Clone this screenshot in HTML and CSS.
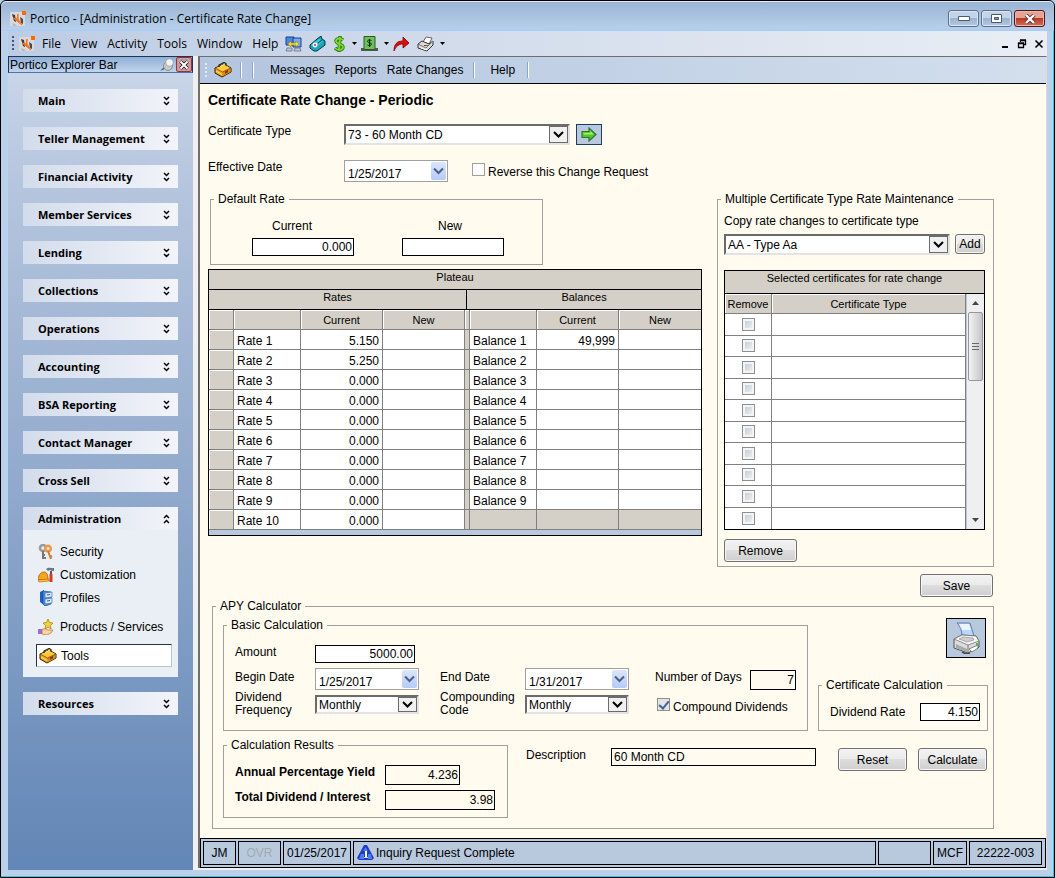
FILE: index.html
```
<!DOCTYPE html>
<html lang="en">
<head>
<meta charset="utf-8">
<title>Portico - [Administration - Certificate Rate Change]</title>
<link rel="stylesheet" href="styles.css">
</head>
<body>
<svg class="defs" aria-hidden="true">
  <symbol id="logo" viewBox="0 0 16 16">
    <path d="M0 1h12v3h3v11H0z" fill="#d9d9dc"/>
    <path d="M2 3l3 1 1 7-2-1z" fill="#3c3c44"/><path d="M10 6l3 2v5l-2-1z" fill="#4a4a52"/>
    <path d="M8 3v5l4 6-5-4-4-3 4 1z" fill="#f4731c" stroke="#f4731c"/>
    <path d="M2 12l3 1 2 2H3z" fill="#b9b9bf"/>
    <path d="M12 0h4v4h-4z" fill="#ff6a00"/>
  </symbol>
  <symbol id="toolbox" viewBox="0 0 18 16">
    <path d="M1 6l9-4 7 4v4l-9 5-7-4z" fill="#f6a81c" stroke="#2a1a00"/>
    <path d="M1.500 6.200L10 2.500l6.500 3.700L8.500 10z" fill="#ffcb3c"/>
    <path d="M8.500 10v4.500l8-4.500V6.200z" fill="#d98a10"/>
    <path d="M1.500 6.200l7 3.800 8-3.800" fill="none" stroke="#7a4600" stroke-width=".8"/>
    <path d="M5 5V3l5-2.500L12 1.500v2" fill="none" stroke="#2a1a00" stroke-width="1.200"/>
    <path d="M6 4.500l5-2.500" stroke="#fff0a0"/>
    <path d="M11 9.500l3-1.600v2.300l-3 1.600z" fill="#8c2f08"/>
    <path d="M2 9l6 3.500" stroke="#ffd970"/>
  </symbol>
  <symbol id="down" viewBox="0 0 7 10"><path d="M1 1l2.500 2.500L6 1M1 6l2.500 2.500L6 6" fill="none" stroke="#000" stroke-width="1.500"/></symbol>
  <symbol id="up" viewBox="0 0 7 10"><path d="M1 4l2.500-2.500L6 4M1 9l2.500-2.500L6 9" fill="none" stroke="#000" stroke-width="1.500"/></symbol>
  <symbol id="chev" viewBox="0 0 11 8"><path d="M1 1.500L5.500 6 10 1.500" fill="none" stroke="currentColor" stroke-width="2"/></symbol>
  <symbol id="caret" viewBox="0 0 6 4"><path d="M0 0h5L2.500 3z" fill="#000"/></symbol>
  <symbol id="printer" viewBox="0 0 30 32">
    <path d="M6 1h13l4 13H11C11 8 9 4 6 1z" fill="#b9d7fb" stroke="#5f7dab"/>
    <path d="M8 2h10l2 6h-9z" fill="#e8f3ff"/>
    <path d="M3 17l8-4 14 1 3 5v6l-11 6L3 26z" fill="#dcdcdc" stroke="#555"/>
    <path d="M3 17l8-4 14 1 3 5-11 4z" fill="#f6f6f6" stroke="#777" stroke-width=".8"/>
    <path d="M8 17l4-2 10 1 1 2-7 2z" fill="#cfcfcf" stroke="#888" stroke-width=".6"/>
    <path d="M17 23v8" stroke="#777"/><path d="M5 22l11 5v3L5 26z" fill="#aaa"/>
    <path d="M18 27l9-4v3l-6 4z" fill="#fff" stroke="#555" stroke-width=".7"/>
    <path d="M25 21h2v2h-2z" fill="#3ec61c"/><path d="M11 30l4 2 4-1" fill="none" stroke="#444" stroke-width="1.400"/>
  </symbol>
</svg>

<header class="titlebar">
  <svg class="i16"><use href="#logo"/></svg>
  <span class="title">Portico - [Administration - Certificate Rate Change]</span>
  <div class="winbuttons">
    <button aria-label="Minimize"><svg width="12" height="6" viewBox="0 0 12 6"><path d="M.5.5h11v4H.5z" fill="#fff" stroke="#4c5a6e"/></svg></button>
    <button aria-label="Maximize"><svg width="12" height="10" viewBox="0 0 12 10"><path d="M.5.5h10v8H.5z" fill="#fff" stroke="#4c5a6e"/><path d="M3.500 3.500h4v2h-4z" fill="#7d9cc0" stroke="#4c5a6e"/></svg></button>
    <button class="close" aria-label="Close"><svg width="12" height="10" viewBox="0 0 12 10"><path d="M2 1l8 8M10 1L2 9" stroke="#5d3034" stroke-width="4"/><path d="M2 1l8 8M10 1L2 9" stroke="#fff" stroke-width="2.400"/></svg></button>
  </div>
</header>

<div class="frame">
<nav class="menubar">
  <span class="grip"></span>
  <svg class="i16 logo"><use href="#logo"/></svg>
  <button>File</button><button>View</button><button>Activity</button><button>Tools</button><button>Window</button><button>Help</button>
  <div class="icons">
    <button aria-label="Connections"><svg width="17" height="16" viewBox="0 0 17 16"><path d="M1 1h8v8H1z" fill="#4b86e0" stroke="#1b3f96"/><path d="M8 2h8v9H8z" fill="#73aaf2" stroke="#1b3f96"/><path d="M2 12h5v3H1zM10 12h5l1 3H9z" fill="#bcc6dc" stroke="#5a6480" stroke-width=".7"/><path d="M3 8l3-3v2h5V5l3 3-3 3V9H6v2z" fill="#ffdc1e" stroke="#a07800" stroke-width=".5"/></svg></button>
    <button aria-label="Phone"><svg width="17" height="16" viewBox="0 0 17 16"><path d="M1 9l7-6 4-3 1 3 3 2v4l-8 6H5l-4-3z" fill="#1aa6bd" stroke="#06343f"/><path d="M2 9l8-6 4 2-8 7z" fill="#3cc6d8"/><circle cx="6" cy="9" r="2.400" fill="#fff"/><circle cx="6" cy="9" r="1.200" fill="#d44cc0"/><path d="M9 7l4-3" stroke="#06343f"/></svg></button>
    <button class="drop" aria-label="Money"><svg width="13" height="16" viewBox="0 0 13 16"><path d="M10 4C8 2 3 2 3 5s7 3 7 6-5 4-8 1M7 0L6 16" fill="none" stroke="#2d7c0c" stroke-width="3.400"/><path d="M10 4C8 2 3 2 3 5s7 3 7 6-5 4-8 1M7 1L6 15" fill="none" stroke="#7fd83a" stroke-width="1.700"/></svg><svg class="caret"><use href="#caret"/></svg></button>
    <button class="drop" aria-label="Cash"><svg width="17" height="16" viewBox="0 0 17 16"><path d="M3 .5h11v13H3z" fill="#6cbf5c" stroke="#2a5a26"/><path d="M0 12h3v2h11v-2h3v3H0z" fill="#555"/><path d="M10.500 4.500c-2-1-4-.5-4 1s4 1 4 2.500-2.500 2-4 1M8.500 3v8" fill="none" stroke="#0b2b0a"/></svg><svg class="caret"><use href="#caret"/></svg></button>
    <button aria-label="Forward"><svg width="17" height="16" viewBox="0 0 17 16"><path d="M1 15C1 8 4 5 10 5V1l6 6-6 5V8c-4 0-7 2-9 7z" fill="#e00c0c" stroke="#7d0000" stroke-width=".8"/></svg></button>
    <button class="drop" aria-label="Print"><svg width="17" height="16" viewBox="0 0 17 16"><path d="M6 6l3-5 6 1-3 6z" fill="#fff" stroke="#444" stroke-width=".8"/><path d="M1 8l4-3 7 3 4-3v4l-6 6-9-3z" fill="#ddd" stroke="#333"/><path d="M1 8l8 4 7-7" fill="none" stroke="#777"/><path d="M4 12l6 2" stroke="#fff"/><path d="M7 9h2v1H7z" fill="#e00"/><path d="M9 9h2v1H9z" fill="#0a0"/></svg><svg class="caret"><use href="#caret"/></svg></button>
  </div>
  <div class="mdi">
    <button aria-label="Minimize form"><svg width="10" height="10"><path d="M2 7h6v2H2z"/></svg></button>
    <button aria-label="Restore form"><svg width="10" height="10" viewBox="0 0 10 10"><path d="M3.500 3V1.500h5v4H7M3 1h6M1.500 4.500h5v4h-5zM1 4h6" fill="none" stroke="#000" stroke-width="1.300"/></svg></button>
    <button aria-label="Close form"><svg width="10" height="10" viewBox="0 0 10 10"><path d="M1.500 1.500l7 7M8.500 1.500l-7 7" stroke="#000" stroke-width="1.600"/></svg></button>
  </div>
</nav>

<div class="workarea">
<aside class="sidebar">
  <div class="panelhead"><span>Portico Explorer Bar</span>
    <button class="pin" aria-label="Pin"><svg width="14" height="14" viewBox="0 0 14 14"><path d="M0 13l5-5 2 2z" fill="#555"/><circle cx="8" cy="8" r="4.500" fill="#c9c9c9" stroke="#8b8b8b"/><circle cx="9.500" cy="4.500" r="3.800" fill="#f3f3f3" stroke="#9a9a9a" stroke-width=".7"/></svg></button>
    <button class="x" aria-label="Close bar"><svg width="10" height="10" viewBox="0 0 10 10"><path d="M1.500 1.500l7 7M8.500 1.500l-7 7" stroke="#301010" stroke-width="3.600"/><path d="M1.500 1.500l7 7M8.500 1.500l-7 7" stroke="#fff" stroke-width="2"/></svg></button>
  </div>
  <div class="groups">
    <button class="group">Main<svg><use href="#down"/></svg></button>
    <button class="group">Teller Management<svg><use href="#down"/></svg></button>
    <button class="group">Financial Activity<svg><use href="#down"/></svg></button>
    <button class="group">Member Services<svg><use href="#down"/></svg></button>
    <button class="group">Lending<svg><use href="#down"/></svg></button>
    <button class="group">Collections<svg><use href="#down"/></svg></button>
    <button class="group">Operations<svg><use href="#down"/></svg></button>
    <button class="group">Accounting<svg><use href="#down"/></svg></button>
    <button class="group">BSA Reporting<svg><use href="#down"/></svg></button>
    <button class="group">Contact Manager<svg><use href="#down"/></svg></button>
    <button class="group">Cross Sell<svg><use href="#down"/></svg></button>
    <div class="open">
      <button class="group">Administration<svg><use href="#up"/></svg></button>
      <div class="items">
        <a href="#"><svg class="i16" viewBox="0 0 16 16"><circle cx="5" cy="4" r="3" fill="none" stroke="#9a9a9a" stroke-width="2.600"/><path d="M5 7v8M5 14h3M5 11h2" stroke="#777" stroke-width="2"/><circle cx="10" cy="4.500" r="2.800" fill="#fbe0c0" stroke="#e79a4a" stroke-width="2.400"/><path d="M10 7l3 8M12 13l2-1" stroke="#d07c2c" stroke-width="2"/></svg>Security</a>
        <a href="#"><svg class="i16" viewBox="0 0 16 16"><path d="M0 13c0-5 3-8 6-8s4 3 4 8z" fill="#f9a51a" stroke="#a85800" stroke-width=".8"/><path d="M0 13l11-1v2L1 15z" fill="#ffc94a" stroke="#a85800" stroke-width=".6"/><path d="M8 2c2-2 5-1 8-1v3h-2l-2-1-2 1z" fill="#707680"/><path d="M13 4v3" stroke="#555" stroke-width="2"/><path d="M13 7v8" stroke="#d83a1c" stroke-width="3"/></svg>Customization</a>
        <a href="#"><svg class="i16" viewBox="0 0 16 16"><path d="M2 2l4-2v15l-4-3z" fill="#1e5fc0"/><path d="M5 1l8 1v12l-6 2-2-2z" fill="#4c93ea" stroke="#1b4b9c" stroke-width=".7"/><path d="M7 3l7-1v5l-7 1zM7 9l7-1v5l-7 1z" fill="#d6e6f9" stroke="#35629e" stroke-width=".6"/><path d="M9 5l3-.5M9 11l3-.5" stroke="#35629e"/></svg>Profiles</a>
        <a href="#" class="spaced"><svg class="i16" viewBox="0 0 16 16"><path d="M10 0l1.500 3.500L15 4l-2.500 2.500L13 10l-3-2-3 2 .5-3.500L5 4l3.500-.5z" fill="#f7d12c" stroke="#9c7c10" stroke-width=".7"/><path d="M0 10h4v5H0z" fill="#9a6adf"/><path d="M4 10h4l2 1h5l-2 3-4 2-5-1z" fill="#ffd3a0" stroke="#b57332" stroke-width=".7"/></svg>Products / Services</a>
        <a href="#" class="current"><svg width="18" height="16"><use href="#toolbox"/></svg>Tools</a>
      </div>
    </div>
    <button class="group">Resources<svg><use href="#down"/></svg></button>
  </div>
</aside>

<main class="main">
  <nav class="toolbar">
    <span class="grip"></span>
    <button class="tb" aria-label="Toolbox"><svg width="18" height="16"><use href="#toolbox"/></svg></button>
    <span class="sep s1"></span><span class="sep s2"></span>
    <button>Messages</button><button>Reports</button><button>Rate Changes</button>
    <span class="sep"></span><button class="help">Help</button><span class="sep"></span>
  </nav>

  <form class="form">
    <h1>Certificate Rate Change - Periodic</h1>
    <div class="line">
      <label class="lead" for="ctype">Certificate Type</label>
      <span class="select wide"><select id="ctype"><option>73 - 60 Month CD</option></select><svg class="arrow"><use href="#chev"/></svg></span>
      <button type="button" class="go" aria-label="Go"><svg width="16" height="15" viewBox="0 0 16 15"><path d="M1 4.500h7V1l7 6.500L8 14v-3.500H1z" fill="#4fcb22" stroke="#37713a" stroke-width="1.200"/><path d="M2.500 6h7V4l3 3.500h-10z" fill="#a4ee7c"/></svg></button>
    </div>
    <div class="line date-line">
      <label class="lead" for="eff">Effective Date</label>
      <span class="date"><input id="eff" value="1/25/2017"><button type="button" aria-label="Pick date"><svg><use href="#chev"/></svg></button></span>
      <span class="check reverse"><input type="checkbox" id="rev"><label for="rev">Reverse this Change Request</label></span>
    </div>

    <div class="columns">
      <div class="left">
        <fieldset class="default-rate">
          <legend>Default Rate</legend>
          <div class="pair">
            <div><label class="l-current" for="dcur">Current</label><input id="dcur" class="box num" value="0.000"></div>
            <div><label class="l-new" for="dnew">New</label><input id="dnew" class="box num"></div>
          </div>
        </fieldset>
        <div class="plateau">
          <table>
            <colgroup><col class="c-head"><col class="c-name"><col class="c-val"><col class="c-val"><col class="c-g1"><col class="c-g2"><col class="c-name"><col class="c-val"><col class="c-val"></colgroup>
            <thead>
              <tr class="band"><th colspan="9">Plateau</th></tr>
              <tr class="band"><th colspan="5" class="split">Rates</th><th colspan="4">Balances</th></tr>
              <tr><th></th><th></th><th>Current</th><th>New</th><th colspan="2"></th><th></th><th>Current</th><th>New</th></tr>
            </thead>
            <tbody>
              <tr><th></th><td>Rate 1</td><td class="n">5.150</td><td></td><td colspan="2" class="g"></td><td>Balance 1</td><td class="n">49,999</td><td></td></tr>
              <tr><th></th><td>Rate 2</td><td class="n">5.250</td><td></td><td colspan="2" class="g"></td><td>Balance 2</td><td class="n"></td><td></td></tr>
              <tr><th></th><td>Rate 3</td><td class="n">0.000</td><td></td><td colspan="2" class="g"></td><td>Balance 3</td><td class="n"></td><td></td></tr>
              <tr><th></th><td>Rate 4</td><td class="n">0.000</td><td></td><td colspan="2" class="g"></td><td>Balance 4</td><td class="n"></td><td></td></tr>
              <tr><th></th><td>Rate 5</td><td class="n">0.000</td><td></td><td colspan="2" class="g"></td><td>Balance 5</td><td class="n"></td><td></td></tr>
              <tr><th></th><td>Rate 6</td><td class="n">0.000</td><td></td><td colspan="2" class="g"></td><td>Balance 6</td><td class="n"></td><td></td></tr>
              <tr><th></th><td>Rate 7</td><td class="n">0.000</td><td></td><td colspan="2" class="g"></td><td>Balance 7</td><td class="n"></td><td></td></tr>
              <tr><th></th><td>Rate 8</td><td class="n">0.000</td><td></td><td colspan="2" class="g"></td><td>Balance 8</td><td class="n"></td><td></td></tr>
              <tr><th></th><td>Rate 9</td><td class="n">0.000</td><td></td><td colspan="2" class="g"></td><td>Balance 9</td><td class="n"></td><td></td></tr>
              <tr><th></th><td>Rate 10</td><td class="n">0.000</td><td></td><td colspan="2" class="g"></td><td class="g"></td><td class="g"></td><td class="g"></td></tr>
            </tbody>
          </table>
        </div>
      </div>

      <fieldset class="multi">
        <legend>Multiple Certificate Type Rate Maintenance</legend>
        <div class="multi-body">
          <label for="copy">Copy rate changes to certificate type</label>
          <div class="copy">
            <span class="select"><select id="copy"><option>AA - Type Aa</option></select><svg class="arrow"><use href="#chev"/></svg></span>
            <button type="button" class="btn add">Add</button>
          </div>
          <div class="picked">
            <div class="picked-title">Selected certificates for rate change</div>
            <div class="picked-body">
              <table>
                <colgroup><col class="c-rem"><col></colgroup>
                <thead><tr><th>Remove</th><th>Certificate Type</th></tr></thead>
                <tbody>
                  <tr><td><input type="checkbox" aria-label="Remove row 1"></td><td></td></tr>
                  <tr><td><input type="checkbox" aria-label="Remove row 2"></td><td></td></tr>
                  <tr><td><input type="checkbox" aria-label="Remove row 3"></td><td></td></tr>
                  <tr><td><input type="checkbox" aria-label="Remove row 4"></td><td></td></tr>
                  <tr><td><input type="checkbox" aria-label="Remove row 5"></td><td></td></tr>
                  <tr><td><input type="checkbox" aria-label="Remove row 6"></td><td></td></tr>
                  <tr><td><input type="checkbox" aria-label="Remove row 7"></td><td></td></tr>
                  <tr><td><input type="checkbox" aria-label="Remove row 8"></td><td></td></tr>
                  <tr><td><input type="checkbox" aria-label="Remove row 9"></td><td></td></tr>
                  <tr><td><input type="checkbox" aria-label="Remove row 10"></td><td></td></tr>
                </tbody>
              </table>
              <div class="scroll">
                <svg width="7" height="4"><path d="M0 4l3.500-4L7 4z" fill="#444"/></svg>
                <div class="thumb"></div>
                <svg class="end" width="7" height="4"><path d="M0 0h7L3.500 4z" fill="#444"/></svg>
              </div>
            </div>
          </div>
          <button type="button" class="btn">Remove</button>
        </div>
      </fieldset>
    </div>

    <div class="save"><button type="button" class="btn">Save</button></div>

    <fieldset class="apy">
      <legend>APY Calculator</legend>
      <div class="apy-row top">
        <fieldset class="basic">
          <legend>Basic Calculation</legend>
          <div class="basic-grid">
            <label for="amt">Amount</label><input id="amt" class="box num amount" value="5000.00">
            <label for="bd" class="row2">Begin Date</label>
            <span class="date row2"><input id="bd" value="1/25/2017"><button type="button" aria-label="Pick begin date"><svg><use href="#chev"/></svg></button></span>
            <label for="ed" class="row2">End Date</label>
            <span class="date row2"><input id="ed" value="1/31/2017"><button type="button" aria-label="Pick end date"><svg><use href="#chev"/></svg></button></span>
            <span class="days row2"><label for="nd">Number of Days</label><input id="nd" class="box num flat tall" value="7"></span>
            <label for="df" class="two">Dividend<br>Frequency</label>
            <span class="select small"><select id="df"><option>Monthly</option></select><svg class="arrow"><use href="#chev"/></svg></span>
            <label for="cc" class="two">Compounding<br>Code</label>
            <span class="select small"><select id="cc"><option>Monthly</option></select><svg class="arrow"><use href="#chev"/></svg></span>
            <span class="check compound"><input type="checkbox" id="cd" checked><label for="cd">Compound Dividends</label></span>
          </div>
        </fieldset>
        <div class="side">
          <button type="button" class="print" aria-label="Print"><svg width="30" height="32"><use href="#printer"/></svg></button>
          <fieldset class="cert">
            <legend>Certificate Calculation</legend>
            <div class="cert-row"><label for="dr">Dividend Rate</label><input id="dr" class="box num" value="4.150"></div>
          </fieldset>
        </div>
      </div>
      <div class="apy-row bottom">
        <fieldset class="results">
          <legend>Calculation Results</legend>
          <div class="results-grid">
            <label for="y">Annual Percentage Yield</label><input id="y" class="box num flat tall yield" value="4.236">
            <label for="t">Total Dividend / Interest</label><input id="t" class="box num flat tall" value="3.98">
          </div>
        </fieldset>
        <div class="actions">
          <label for="desc">Description</label><input id="desc" class="box flat desc" value="60 Month CD">
          <button type="button" class="btn">Reset</button><button type="button" class="btn">Calculate</button>
        </div>
      </div>
    </fieldset>
  </form>

  <footer class="status">
    <span class="jm">JM</span><span class="ovr">OVR</span><span class="day">01/25/2017</span>
    <span class="msg"><svg width="17" height="16" viewBox="0 0 17 16"><path d="M7 0h3l7 13-2 2H2l-2-2z" fill="#1f3fc0"/><path d="M8.500 2L11 6H6zM4 9h3v5H2zM11 9h3l1 5h-4z" fill="#4f7df0"/><path d="M8 6h2v6H8z" fill="#fff"/><path d="M7 12h4v1H7z" fill="#c9d8ff"/></svg>Inquiry Request Complete</span>
    <span class="blank"></span><span class="mcf">MCF</span><span class="inst">22222-003</span>
  </footer>
</main>
</div>
</div>
</body>
</html>
```
FILE: styles.css
```
* { box-sizing: border-box; }
html, body { margin: 0; }
body {
  min-height: 100vh;
  display: flex;
  flex-direction: column;
  font: 12px/14px "Liberation Sans", Arial, sans-serif;
  color: #000;
  background: #b9d1ea;
  border: 1px solid #000;
  border-radius: 6px 6px 0 0;
  box-shadow: inset -1px -1px 0 #35c8e0;
}
button, input, select { font: inherit; color: inherit; margin: 0; }
button { padding: 0; border: 0; background: none; }
svg { display: block; flex: none; }
.defs { position: absolute; width: 0; height: 0; }
.i16 { width: 16px; height: 16px; }

/* Title bar */
.titlebar {
  display: flex;
  align-items: center;
  height: 30px;
  padding: 4px 9px 0 9px;
  background: linear-gradient(#9ab4d3, #b6cfe9 90%, #a9cbfb);
  border-radius: 6px 6px 0 0;
  border-top: 1px solid #e3eefa;
  font: 12px/16px "Open Sans", "Noto Sans", sans-serif;
}
.title { flex: 1; padding-left: 4px; }
.winbuttons { display: flex; gap: 2px; }
.winbuttons button {
  width: 31px; height: 17px;
  display: grid; place-items: center;
  border: 1px solid #57708f;
  border-radius: 3px;
  background: linear-gradient(#c3d4e8 48%, #9ab3d0 50%, #b5cae2);
  box-shadow: inset 0 0 0 1px #dbe7f4;
}
.winbuttons .close { border-color: #571414; background: linear-gradient(#e3a396 45%, #bc3a22 50%, #d2705a); box-shadow: inset 0 0 0 1px #eab8ae; }

.frame { flex: 1; display: flex; flex-direction: column; margin: 0 7px 7px; background: #f0f0f0; }

/* Menu bar */
.menubar {
  display: flex;
  align-items: center;
  gap: 10px;
  height: 25px;
  padding-left: 4px;
  background: linear-gradient(90deg, #bccce4, #d5deec 50%, #e9eef5);
  font: 12px/16px "Open Sans", "Noto Sans", sans-serif;
}
.grip { width: 2px; height: 15px; background: repeating-linear-gradient(#3b5786 0 2px, transparent 2px 4px); }
.menubar .logo { margin-left: -5px; margin-right: -3px; }
.icons { display: flex; gap: 7px; margin-left: -3px; }
.icons .drop { display: flex; align-items: center; gap: 6px; margin-right: -4px; }
.caret { width: 6px; height: 4px; }
.mdi { display: flex; gap: 7px; margin-left: auto; padding-right: 3px; }

.workarea { flex: 1; display: flex; }

/* Explorer bar */
.sidebar {
  width: 185px;
  display: flex;
  flex-direction: column;
  background: linear-gradient(#ccd7e9, #b6c6de 15%, #6286b6);
}
.panelhead {
  display: flex;
  align-items: center;
  height: 17px;
  padding-left: 1px;
  border: 1px solid #1d3557;
  border-bottom-color: #4a74a8;
  background: linear-gradient(#8fafd6, #c3d4ec);
}
.panelhead span { flex: 1; }
.panelhead .x { width: 16px; height: 15px; margin-left: 2px; display: grid; place-items: center; border: 1px solid #b02a2a; border-radius: 2px; background: #b9a1a8; }
.groups { display: flex; flex-direction: column; gap: 15px; padding: 16px 15px; }
.group {
  display: flex;
  align-items: center;
  justify-content: space-between;
  width: 100%;
  height: 23px;
  padding: 0 8px 0 15px;
  background: linear-gradient(90deg, #d3dcec, #f2f4f9);
  font: bold 11px/14px "Open Sans", "Noto Sans", sans-serif;
}
.group svg { width: 7px; height: 10px; }
.items { display: flex; flex-direction: column; padding: 10px 6px 10px 13px; background: #e9eff4; }
.items a { display: flex; align-items: center; gap: 6px; height: 23px; padding-left: 2px; color: #000; text-decoration: none; }
.items a.spaced { margin: 6px 0; }
.items a.current { gap: 4px; border: 1px solid #b4c6da; border-top-color: #24344c; border-left-color: #24344c; background: #fff; }

/* Main pane */
.main { flex: 1; display: flex; flex-direction: column; margin: 0 0 2px 5px; border: solid #6f6f6f; border-width: 1px 0 0 2px; border-right: 1px solid #dcdcdc; background: #fffbef; }
.toolbar {
  display: flex;
  align-items: center;
  height: 27px;
  padding-left: 5px;
  gap: 10px;
  border-bottom: 1px solid #000;
  background: linear-gradient(90deg, #b3c5df, #d3dfed);
}
.toolbar .grip { background: repeating-linear-gradient(#e5ebf4 0 2px, transparent 2px 4px); }
.toolbar .tb { margin-left: -3px; }
.sep { width: 2px; height: 16px; border-left: 1px solid #8ea4c4; border-right: 1px solid #fff; }
.sep.s1 { margin-left: -2px; }
.sep.s2 { margin-right: 6px; }
.toolbar .help { margin: 0 2px 0 5px; }

.form { flex: 1; padding: 8px 8px 9px; }
.form h1 { margin: 0 0 16px; font: bold 14px/16px "Liberation Sans", Arial, sans-serif; }
.line { display: flex; align-items: flex-start; margin-bottom: 15px; }
.date-line { margin-bottom: 10px; }
.lead { width: 136px; }

fieldset { min-width: 0; margin: 0; padding: 0; border: 1px solid #a0a0a0; }
legend { margin-left: 3px; padding: 0 4px; }

.box { height: 18px; padding: 0 2px; border: 1px solid #000; border-radius: 0; background: #fff; }
.num { text-align: right; padding-right: 1px; }
.flat { background: #fffbef; }
.tall { height: 20px; }

.select { position: relative; display: block; height: 21px; border: 2px solid #6b6b6b; border-right-color: #e3e3e3; border-bottom-color: #e3e3e3; background: #fff; }
.select select { display: block; width: 100%; height: 100%; padding: 0 20px 0 2px; border: 0; border-radius: 0; background: none; appearance: none; }
.select .arrow { position: absolute; top: 0; right: 0; width: 19px; height: 100%; padding: 3px; border: 1px solid #6b6b6b; background: #f0f0f0; pointer-events: none; }
.wide { width: 226px; }
.small { width: 104px; height: 19px; }
.small .arrow { padding: 2px 3px; }
.go { width: 26px; height: 21px; margin-left: 6px; display: grid; place-items: center; border: 1px solid #1f3a63; background: #b8c9de; }

.date { display: flex; width: 104px; height: 22px; padding: 1px; border: 1px solid #a0a0a0; background: #fff; }
.date input { flex: 1; min-width: 0; padding: 5px 0 0 2px; border: 0; background: none; }
.date button { width: 15px; display: grid; place-items: center; border-radius: 2px; background: linear-gradient(#dbe6fc, #b5caf8); color: #4a6185; }
.date svg { width: 11px; height: 8px; }

input[type="checkbox"] { appearance: none; flex: none; width: 13px; height: 13px; border: 1px solid #a0a0a0; background: #fff; }
.check { display: flex; align-items: flex-start; gap: 3px; }
.check label { margin-top: 2px; }
.reverse { margin: 3px 0 0 24px; }
.reverse label { white-space: nowrap; }

.columns { display: flex; align-items: flex-start; gap: 15px; }
.left { width: 494px; }
.default-rate { width: 333px; height: 73px; margin: 0 0 4px 2px; }
.pair { display: flex; gap: 48px; padding: 13px 0 0 41px; }
.pair div { display: flex; flex-direction: column; gap: 5px; }
.pair input { width: 102px; }
.l-current { padding-left: 20px; }
.l-new { padding-left: 36px; }

table { border-collapse: separate; border-spacing: 0; table-layout: fixed; background: #fff; }
th { font-size: 11px; font-weight: normal; background: #d4d0c8; }
th, td { padding: 0; border: solid #808080; border-width: 0 1px 1px 0; }
.plateau { border: 1px solid #000; padding-bottom: 5px; background: #b8c9de; }
.plateau table { width: 100%; }
.plateau tr { height: 20px; }
.plateau td { padding: 2px 3px 0; }
.plateau td:last-child, .plateau th:last-child { border-right: 0; }
.plateau .band th { vertical-align: top; border-color: #000; }
.plateau .n { text-align: right; }
.plateau .g { padding: 0; background: #d4d0c8; }
.plateau tr:not(.band) th { box-shadow: inset 1px 1px 0 #fff; }
.c-head { width: 25px; } .c-name { width: 67px; } .c-val { width: 82px; } .c-g1 { width: 2px; } .c-g2 { width: 3px; }

.multi { flex: 0 0 277px; }
.multi-body { display: flex; flex-direction: column; align-items: flex-start; padding: 8px 8px 4px 6px; }
.copy { display: flex; gap: 5px; width: 100%; margin: 6px 0 15px; }
.copy .select { flex: 1; }
.picked { width: 100%; border: 1px solid #000; margin-bottom: 9px; }
.picked-title { height: 23px; border-bottom: 1px solid #000; background: #d4d0c8; font-size: 11px; text-align: center; }
.picked-body { display: flex; }
.picked table { flex: 1; width: 0; }
.picked thead tr { height: 20px; }
.picked th { box-shadow: inset 1px 1px 0 #fff; }
.picked tbody tr { height: 21px; }
.picked tbody tr:nth-child(odd) { height: 22px; }
.picked tbody tr:last-child td { border-bottom: 0; }
.picked td { padding-bottom: 1px; text-align: center; }
.picked td input { display: block; margin: 0 auto; border-color: #8e8f8f; background: linear-gradient(135deg, #bcc6d2, #f6f6f6); box-shadow: inset 0 0 0 2px #f4f4f4; }
.c-rem { width: 47px; }
.scroll { width: 18px; display: flex; flex-direction: column; align-items: center; padding: 7px 1px; background: #efefef; border-left: 1px solid #b8c9de; }
.thumb { width: 15px; height: 69px; margin-top: 7px; border: 1px solid #979797; border-radius: 2px; background: repeating-linear-gradient(#666 0 1px, transparent 1px 3px) center / 7px 8px no-repeat, linear-gradient(90deg, #f3f3f3, #dcdcdc 50%, #c6c6c9); }
.scroll .end { margin-top: auto; }

.btn { width: 73px; height: 23px; border: 1px solid #707070; border-radius: 3px; background: linear-gradient(#f2f2f2, #ebebeb 49%, #dddddd 50%, #cfcfcf); box-shadow: inset 0 0 0 1px #f6f6f6; }
.add { width: 30px; height: 20px; }
.save { display: flex; justify-content: flex-end; width: 785px; margin: 7px 0 2px; }

/* APY calculator */
.apy { width: 782px; margin-left: 4px; padding-bottom: 10px; }
.apy-row { display: flex; padding-left: 10px; }
.apy-row.top { padding-top: 5px; padding-right: 5px; gap: 10px; }
.basic { width: 585px; height: 113px; }
.basic-grid { display: grid; grid-template-columns: 80px 125px 85px 130px auto; justify-content: start; padding: 13px 0 0 11px; }
.amount { width: 100px; grid-column: 2 / span 4; }
.row2 { margin-top: 5px; }
label.row2 { margin-top: 7px; }
.days { display: flex; justify-content: space-between; width: 141px; margin-top: 7px; }
.days input { width: 46px; }
.two { margin-top: 1px; line-height: 13px; }
.basic-grid .small { margin-top: 5px; }
.compound { margin: 8px 0 0 2px; }
.compound input { border-color: #8e8f8f; background: #e4e4e4; position: relative; }
.compound input:checked::after { content: ""; position: absolute; left: 3px; top: 0; width: 4px; height: 8px; border: solid #44619d; border-width: 0 2px 2px 0; transform: rotate(40deg); }
.side { flex: 1; display: flex; flex-direction: column; justify-content: space-between; }
.print { width: 40px; height: 40px; align-self: flex-end; margin-right: 2px; display: grid; place-items: center; border: 1px solid #000; background: #b8c9de; }
.cert { height: 53px; }
.cert-row { display: flex; justify-content: space-between; align-items: center; padding: 11px 7px 0 11px; }
.cert-row input { width: 60px; }
.apy-row.bottom { padding-top: 7px; }
.results { width: 285px; height: 80px; }
.results-grid { display: grid; grid-template-columns: 150px 110px; gap: 5px 0; align-items: start; padding: 13px 0 0 11px; }
.results-grid label { font-weight: bold; }
.yield { width: 75px; }
.actions { display: flex; align-items: flex-start; padding: 10px 0 0 18px; }
.actions label { width: 85px; }
.actions .desc { width: 205px; margin-right: 11px; }
.actions .btn { width: 69px; margin-left: 11px; }

/* Status bar */
.status { display: flex; gap: 2px; height: 30px; padding: 2px 3px 2px 2px; border: 1px solid #000; background: #b8c9de; }
.status span { display: flex; align-items: center; justify-content: center; border: 1px solid #000; }
.jm { width: 33px; } .ovr { width: 43px; color: #a3a9b0; } .day { width: 68px; }
.status .msg { flex: 1; justify-content: flex-start; gap: 2px; padding-left: 3px; }
.blank { width: 53px; } .mcf { width: 34px; } .inst { width: 73px; }
```
